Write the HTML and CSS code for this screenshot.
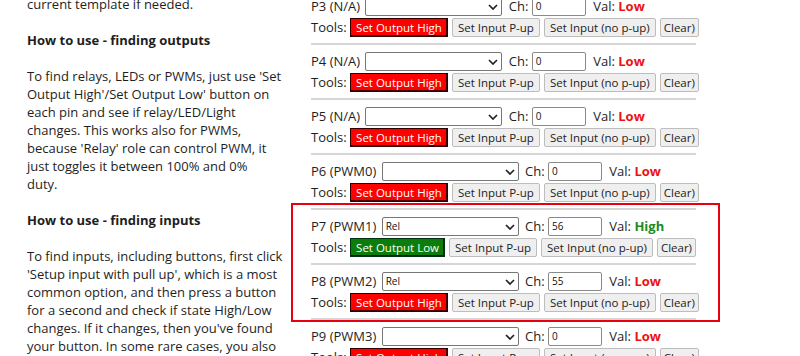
FILE: index.html
```html
<!DOCTYPE html>
<html>
<head>
<meta charset="utf-8">
<link rel="stylesheet" href="styles.css">
</head>
<body>
<div class="page">
  <div class="doc">
    <p>current template if needed.</p>
    <p class="h">How to use - finding outputs</p>
    <p>To find relays, LEDs or PWMs, just use 'Set Output High'/Set Output Low' button on each pin and see if relay/LED/Light changes. This works also for PWMs, because 'Relay' role can control PWM, it just toggles it between 100% and 0%<br>duty.</p>
    <p class="h">How to use - finding inputs</p>
    <p>To find inputs, including buttons, first click 'Setup input with pull up', which is a most common option, and then press a button for a second and check if state High/Low changes. If it changes, then you've found your button. In some rare cases, you also need to use input without pull up.</p>
  </div>
  <div class="pins">
    <div class="pin">
      <div class="row">P3 (N/A) <span class="sel"><select><option></option></select><svg width="10" height="6" viewBox="0 0 10 6"><path d="M1 1l4 4 4-4" fill="none" stroke="#222" stroke-width="1.7"/></svg></span> Ch: <input class="ch" value="0"> Val: <b class="low">Low</b></div>
      <div class="row">Tools: <button class="b-high">Set Output High</button> <button>Set Input P-up</button> <button>Set Input (no p-up)</button> <button class="clr">Clear)</button></div>
      <div class="sep"></div>
    </div>
    <div class="pin">
      <div class="row">P4 (N/A) <span class="sel"><select><option></option></select><svg width="10" height="6" viewBox="0 0 10 6"><path d="M1 1l4 4 4-4" fill="none" stroke="#222" stroke-width="1.7"/></svg></span> Ch: <input class="ch" value="0"> Val: <b class="low">Low</b></div>
      <div class="row">Tools: <button class="b-high">Set Output High</button> <button>Set Input P-up</button> <button>Set Input (no p-up)</button> <button class="clr">Clear)</button></div>
      <div class="sep"></div>
    </div>
    <div class="pin">
      <div class="row">P5 (N/A) <span class="sel"><select><option></option></select><svg width="10" height="6" viewBox="0 0 10 6"><path d="M1 1l4 4 4-4" fill="none" stroke="#222" stroke-width="1.7"/></svg></span> Ch: <input class="ch" value="0"> Val: <b class="low">Low</b></div>
      <div class="row">Tools: <button class="b-high">Set Output High</button> <button>Set Input P-up</button> <button>Set Input (no p-up)</button> <button class="clr">Clear)</button></div>
      <div class="sep"></div>
    </div>
    <div class="pin">
      <div class="row">P6 (PWM0) <span class="sel"><select><option></option></select><svg width="10" height="6" viewBox="0 0 10 6"><path d="M1 1l4 4 4-4" fill="none" stroke="#222" stroke-width="1.7"/></svg></span> Ch: <input class="ch" value="0"> Val: <b class="low">Low</b></div>
      <div class="row">Tools: <button class="b-high">Set Output High</button> <button>Set Input P-up</button> <button>Set Input (no p-up)</button> <button class="clr">Clear)</button></div>
      <div class="sep"></div>
    </div>
    <div class="pin">
      <div class="row">P7 (PWM1) <span class="sel"><select><option>Rel</option></select><svg width="10" height="6" viewBox="0 0 10 6"><path d="M1 1l4 4 4-4" fill="none" stroke="#222" stroke-width="1.7"/></svg></span> Ch: <input class="ch" value="56"> Val: <b class="high">High</b></div>
      <div class="row">Tools: <button class="b-low">Set Output Low</button> <button>Set Input P-up</button> <button>Set Input (no p-up)</button> <button class="clr">Clear)</button></div>
      <div class="sep"></div>
    </div>
    <div class="pin">
      <div class="row">P8 (PWM2) <span class="sel"><select><option>Rel</option></select><svg width="10" height="6" viewBox="0 0 10 6"><path d="M1 1l4 4 4-4" fill="none" stroke="#222" stroke-width="1.7"/></svg></span> Ch: <input class="ch" value="55"> Val: <b class="low">Low</b></div>
      <div class="row">Tools: <button class="b-high">Set Output High</button> <button>Set Input P-up</button> <button>Set Input (no p-up)</button> <button class="clr">Clear)</button></div>
      <div class="sep"></div>
    </div>
    <div class="pin">
      <div class="row">P9 (PWM3) <span class="sel"><select><option></option></select><svg width="10" height="6" viewBox="0 0 10 6"><path d="M1 1l4 4 4-4" fill="none" stroke="#222" stroke-width="1.7"/></svg></span> Ch: <input class="ch" value="0"> Val: <b class="low">Low</b></div>
      <div class="row">Tools: <button class="b-high">Set Output High</button> <button>Set Input P-up</button> <button>Set Input (no p-up)</button> <button class="clr">Clear)</button></div>
      <div class="sep"></div>
    </div>
  </div>
  <div class="mark"></div>
</div>
</body>
</html>
```

FILE: styles.css
```css
html, body {
  margin: 0;
  padding: 0;
  background: #fff;
  overflow: hidden;
}
body {
  font-family: "Open Sans", "Noto Sans", sans-serif;
  color: #1e1e1e;
  width: 800px;
  height: 356px;
}
.page {
  position: relative;
  display: flex;
  margin-top: -5px;
}
.doc {
  width: 258px;
  padding-left: 27px;
  font-size: 13px;
  line-height: 18px;
}
.doc p {
  margin: 0 0 18px 0;
}
.doc .h {
  font-weight: 700;
}
.pins {
  margin-left: 26px;
  width: 385px;
  padding-top: 0.5px;
  font-size: 13px;
}
.row {
  height: 21px;
  display: flex;
  align-items: center;
  white-space: pre;
}
.sel {
  position: relative;
  display: inline-flex;
  margin: 0 3px 0 2px;
}
.sel select {
  appearance: none;
  -webkit-appearance: none;
  width: 137px;
  height: 19px;
  box-sizing: border-box;
  border: 1px solid #767676;
  border-radius: 2px;
  background: #fff;
  font-family: "Open Sans", sans-serif;
  font-size: 10px;
  padding: 0 3px;
  color: #111;
  margin: 0;
}
.sel svg {
  position: absolute;
  right: 4px;
  top: 7px;
}
.ch {
  width: 54px;
  height: 19px;
  box-sizing: border-box;
  border: 1px solid #8a8a8a;
  border-radius: 2px;
  font-family: "Open Sans", sans-serif;
  font-size: 10px;
  padding: 0 3px;
  margin: 0 4px 0 0;
  color: #111;
}
b {
  font-weight: 700;
}
.low { color: #ee1111; }
.high { color: #1c8a1c; }
button {
  height: 19px;
  box-sizing: border-box;
  font-family: "Open Sans", sans-serif;
  font-size: 11.5px;
  padding: 0 5px;
  margin: 0 4px 0 0;
  background: #efefef;
  border: 1px solid #bdbdbd;
  border-radius: 2px;
  color: #222;
  line-height: 17px;
}
.clr {
  padding: 0 3px;
}
.b-high {
  background: #ff0000;
  color: #fff;
  border: 1px solid #300;
  border-radius: 0;
  box-shadow: inset -1px -1px 0 #400;
}
.b-low {
  background: #0b7d0b;
  color: #fff;
  border: 1px solid #031;
  border-radius: 0;
  box-shadow: inset -1px -1px 0 #020;
}
.sep {
  margin: 5px 0 6px 0;
  border-top: 2px solid #d6d6d6;
}
.mark {
  position: absolute;
  left: 291px;
  top: 208px;
  width: 425px;
  height: 115px;
  border: 2px solid #e80010;
}
```
